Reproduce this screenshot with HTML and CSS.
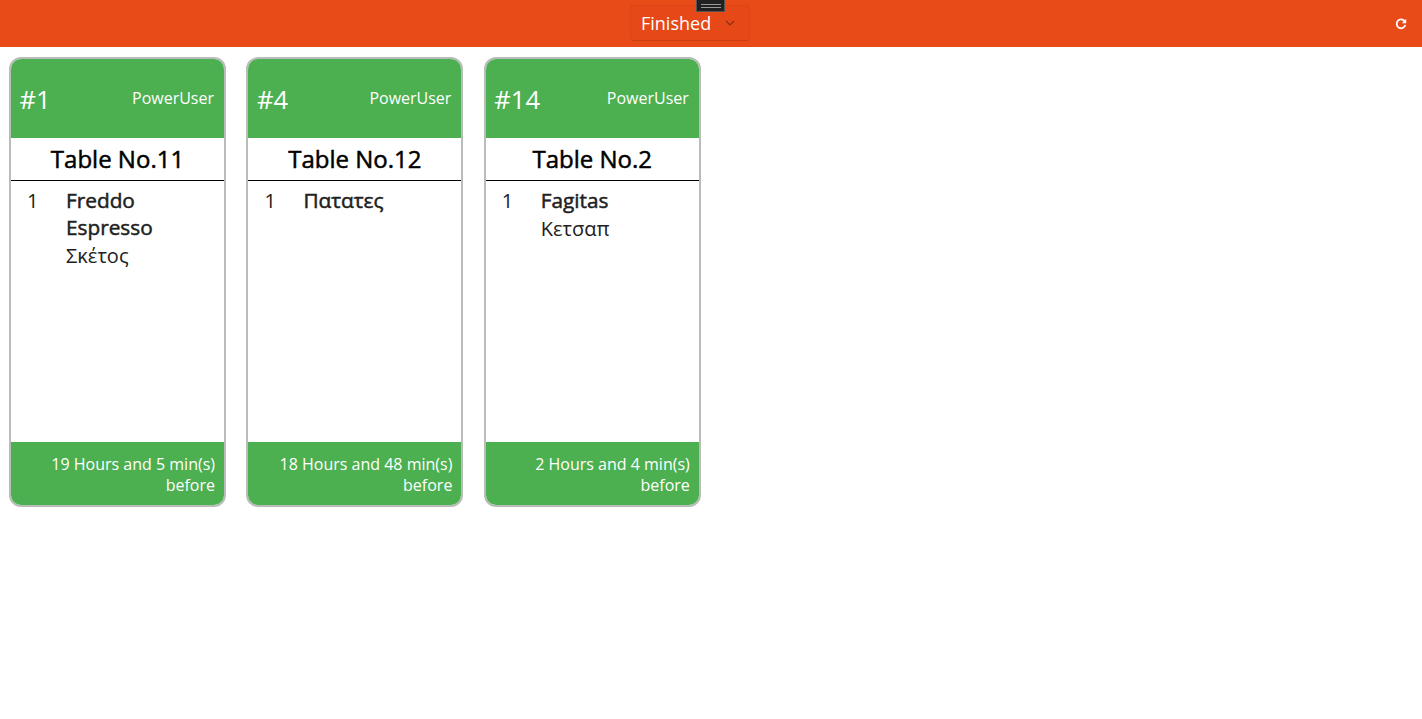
FILE: index.html
```html
<!DOCTYPE html>
<html lang="en">
<head>
    <meta charset="UTF-8">
    <title>Orders</title>
    <link rel="stylesheet" href="styles.css">
</head>
<body>
    <header class="topbar">
        <div class="handle"><span class="handle-lines"></span></div>
        <div class="status-select">
            <span class="status-label">Finished</span>
            <svg class="chevron" width="10" height="6" viewBox="0 0 10 6"><path d="M1 1l4 4 4-4" fill="none" stroke="#8a2f12" stroke-width="1.2"/></svg>
        </div>
        <svg class="refresh" width="12" height="12" viewBox="0 0 12 12"><path d="M9.6 3.2A4.4 4.4 0 1 0 10.3 7" fill="none" stroke="#fff" stroke-width="1.8"/><path d="M11.2 0.8v4.4H6.8z" fill="#fff"/></svg>
    </header>

    <main class="orders">
        <section class="card">
            <div class="card-head">
                <span class="order-no">#1</span>
                <span class="user">PowerUser</span>
            </div>
            <div class="table-name">Table No.11</div>
            <div class="items">
                <div class="qty">1</div>
                <div class="item">
                    <div class="item-name">Freddo Espresso</div>
                    <div class="item-note">Σκέτος</div>
                </div>
            </div>
            <div class="card-foot">19 Hours and 5 min(s) before</div>
        </section>

        <section class="card">
            <div class="card-head">
                <span class="order-no">#4</span>
                <span class="user">PowerUser</span>
            </div>
            <div class="table-name">Table No.12</div>
            <div class="items">
                <div class="qty">1</div>
                <div class="item">
                    <div class="item-name">Πατατες</div>
                </div>
            </div>
            <div class="card-foot">18 Hours and 48 min(s) before</div>
        </section>

        <section class="card">
            <div class="card-head">
                <span class="order-no">#14</span>
                <span class="user">PowerUser</span>
            </div>
            <div class="table-name">Table No.2</div>
            <div class="items">
                <div class="qty">1</div>
                <div class="item">
                    <div class="item-name">Fagitas</div>
                    <div class="item-note">Κετσαπ</div>
                </div>
            </div>
            <div class="card-foot">2 Hours and 4 min(s) before</div>
        </section>
    </main>
</body>
</html>
```
FILE: styles.css
```css
body {
    margin: 0;
    font-family: "Open Sans", "Noto Sans", sans-serif;
    background-color: #fff;
    color: #212121;
}
.topbar {
    position: relative;
    height: 47px;
    background-color: #e84a18;
    display: flex;
    justify-content: center;
    align-items: flex-start;
}
.handle {
    position: absolute;
    top: 0;
    left: 696px;
    width: 29px;
    height: 12px;
    box-sizing: border-box;
    background-color: #212121;
    border: 1px solid #555;
    border-top: none;
    display: flex;
    justify-content: center;
    align-items: center;
}
.handle-lines {
    display: block;
    width: 20px;
    height: 2px;
    margin-top: 1px;
    border-top: 1px solid #999;
    border-bottom: 1px solid #999;
}
.status-select {
    margin: 5px 42px 0 0;
    width: 120px;
    height: 36px;
    box-sizing: border-box;
    padding: 0 14px 0 10px;
    display: flex;
    align-items: center;
    justify-content: space-between;
    border: 1px solid rgba(150, 50, 15, 0.12);
    border-bottom-color: rgba(150, 50, 15, 0.35);
    border-radius: 4px;
    background-color: #e64917;
}
.status-label {
    font-size: 18px;
    color: #fff;
}
.refresh {
    position: absolute;
    top: 18px;
    right: 15px;
}
.orders {
    display: flex;
    gap: 20.4px;
    padding: 10px 9px;
}
.card {
    width: 217px;
    height: 450px;
    box-sizing: border-box;
    border: 2px solid #b9bdb9;
    border-radius: 12px;
    overflow: hidden;
    display: flex;
    flex-direction: column;
}
.card-head {
    height: 79px;
    flex-shrink: 0;
    background-color: #4caf50;
    color: #fff;
    display: flex;
    justify-content: space-between;
    align-items: center;
    padding: 0 10px 0 8.5px;
}
.order-no {
    font-size: 25.6px;
    margin-top: 2px;
}
.user {
    font-size: 16px;
    margin-bottom: 2px;
}
.table-name {
    height: 43px;
    flex-shrink: 0;
    box-sizing: border-box;
    border-bottom: 1px solid #000;
    color: #000;
    text-align: center;
    font-size: 24px;
    -webkit-text-stroke: 0.5px #000;
    line-height: 41px;
}
.items {
    flex-grow: 1;
    display: flex;
    padding: 6px 16px 0;
    font-size: 20px;
    line-height: 27px;
}
.qty {
    width: 39px;
    flex-shrink: 0;
}
.item-name {
    font-size: 20.8px;
    -webkit-text-stroke: 0.5px #212121;
}
.item-note {
    margin-top: 1px;
}
.card-foot {
    height: 63px;
    flex-shrink: 0;
    box-sizing: border-box;
    background-color: #4caf50;
    color: #fff;
    font-size: 16px;
    line-height: 21px;
    text-align: right;
    padding: 12px 9px 0 30px;
}
```
